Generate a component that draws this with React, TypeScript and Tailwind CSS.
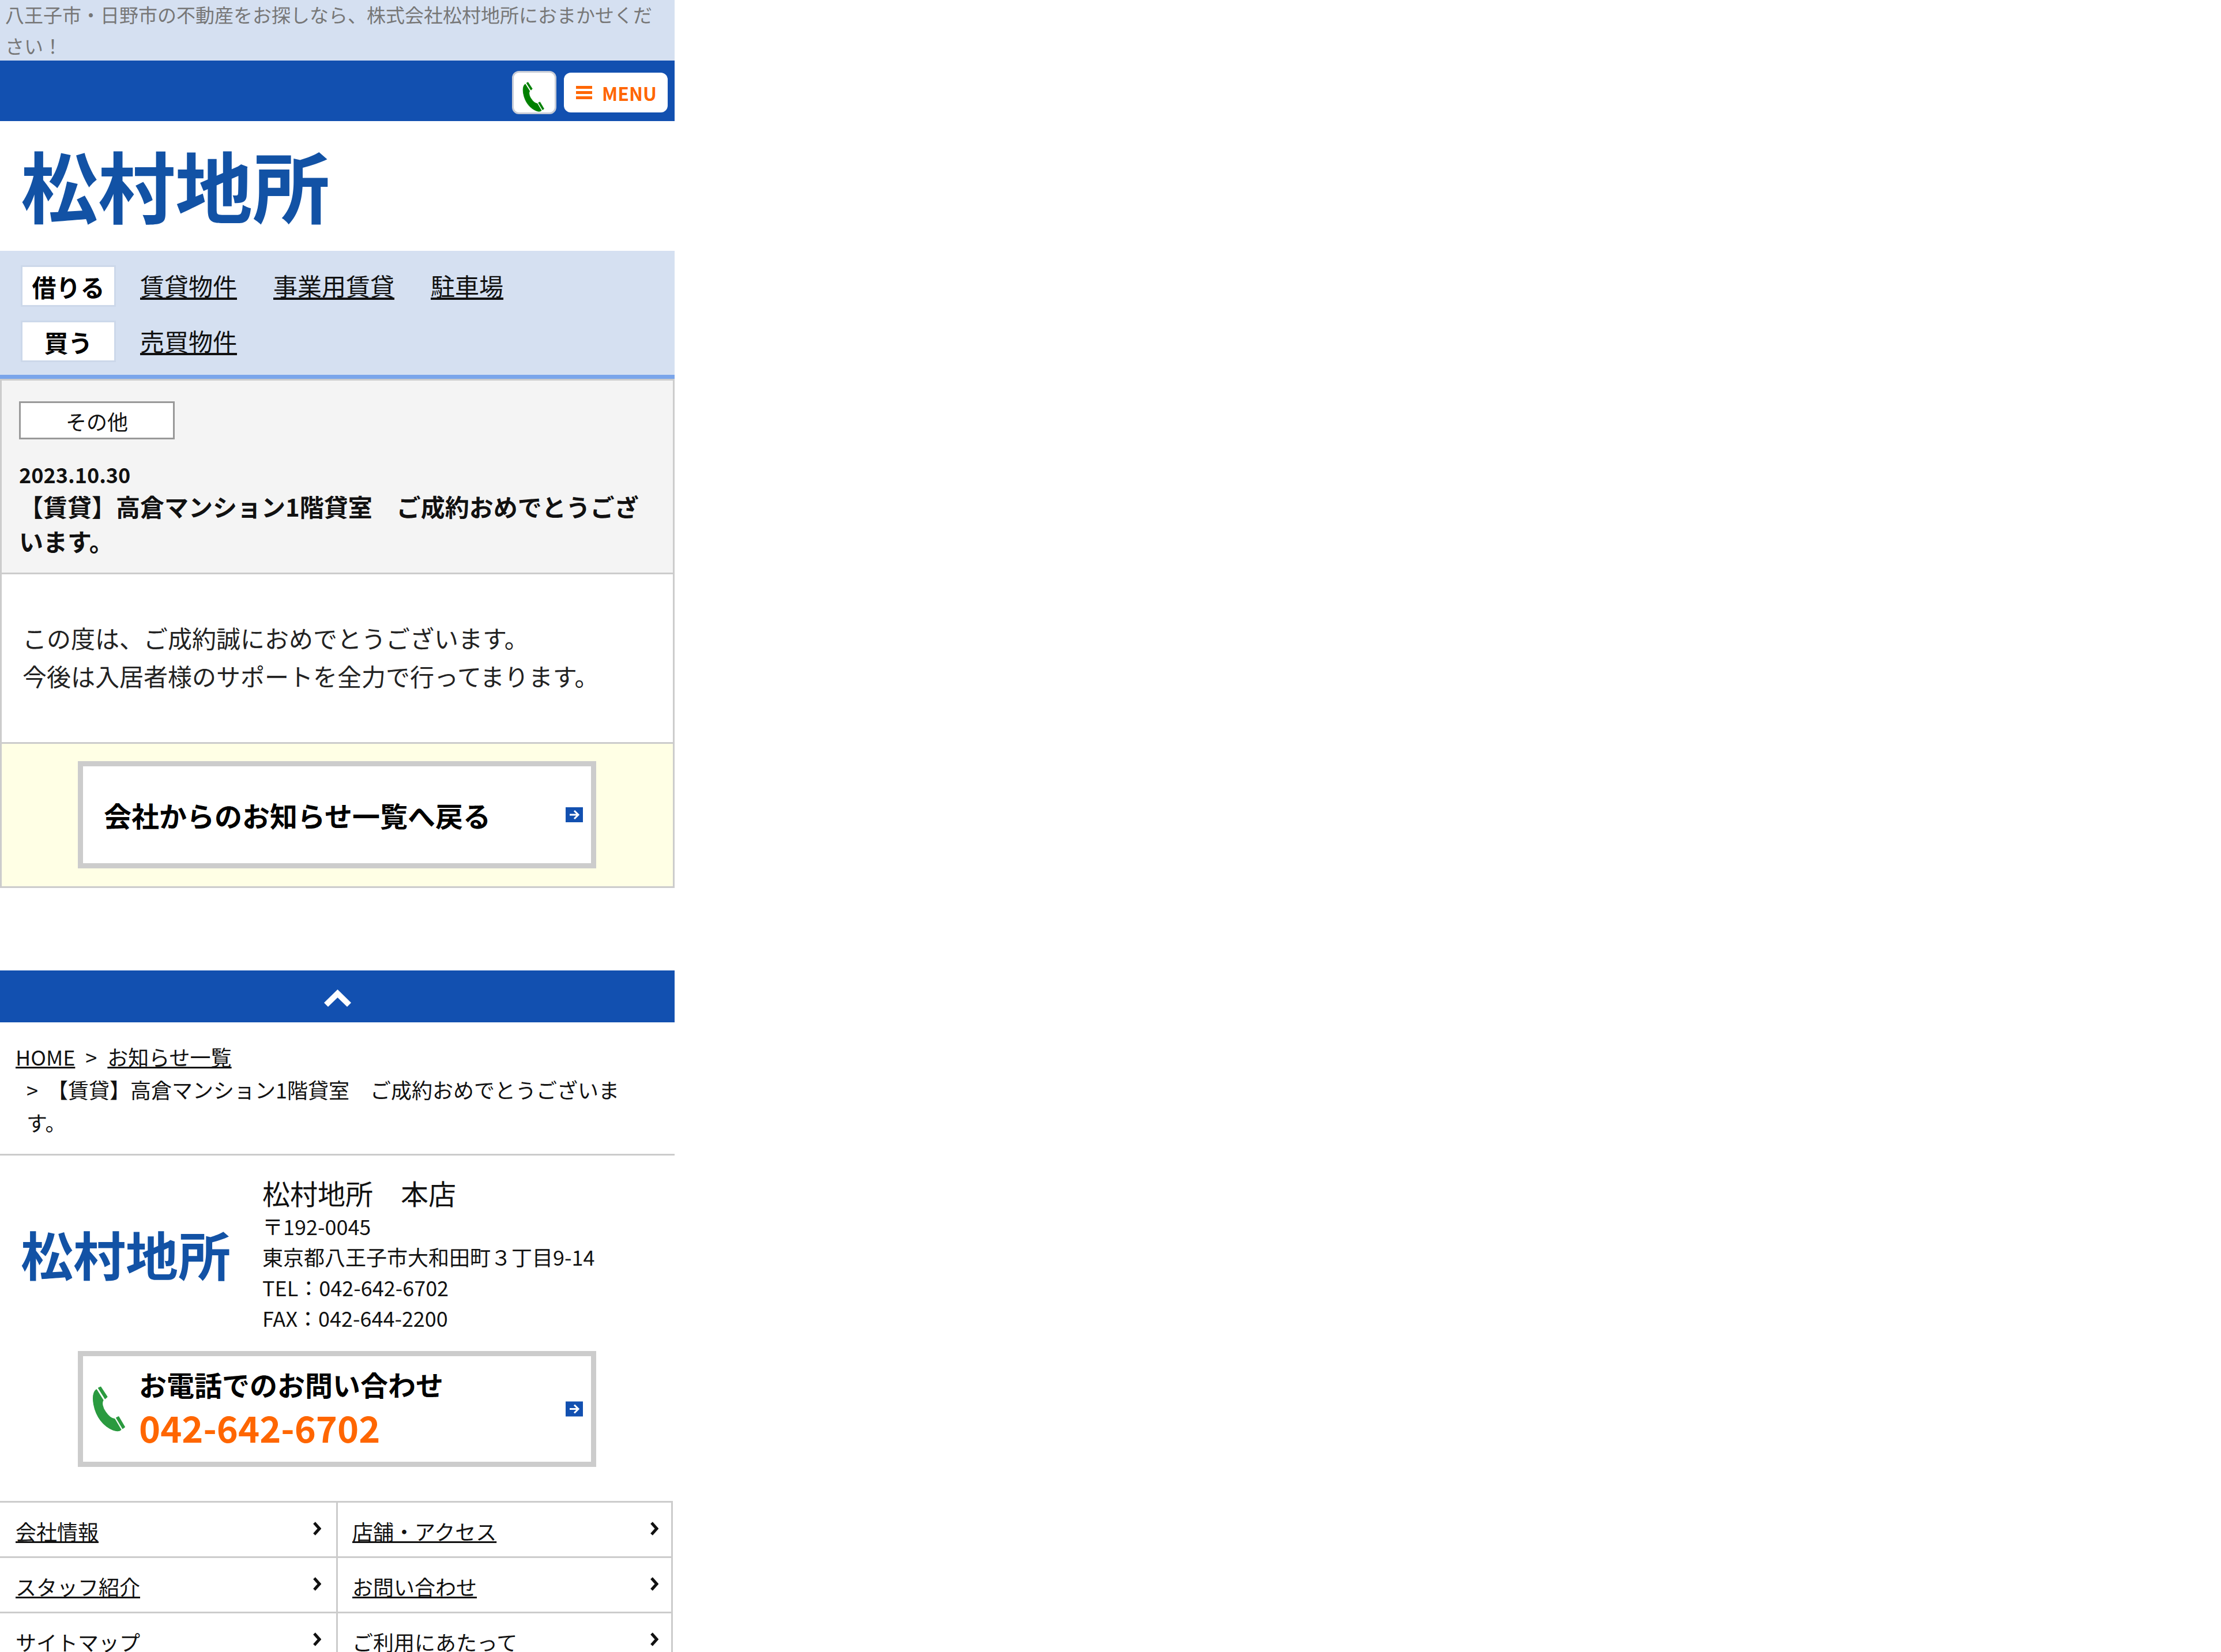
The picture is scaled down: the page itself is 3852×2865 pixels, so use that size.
const FONT = "font-['Noto_Sans_CJK_JP','Noto_Sans',sans-serif]";

function Phone({ className }: { className: string }) {
  return (
    <svg viewBox="90 215 172 237" className={className} fill="currentColor" stroke="currentColor" strokeWidth="4" strokeLinejoin="round">
      <path d="M112 232 L147 288 C139 300 142 325 160 350 C175 372 192 385 207 386 L240 442 C232 450 215 450 200 444 C150 425 110 375 98 310 C92 275 94 245 112 232 Z" />
      <path d="M122 224 L134 218 L168 270 L157 280 Z" />
      <path d="M216 380 L228 374 L260 428 L249 436 Z" />
    </svg>
  );
}

function ArrowBox({ className }: { className: string }) {
  return (
    <svg viewBox="0 0 30 26" className={className}>
      <rect width="30" height="26" fill="#1250b0" />
      <path d="M7 13 H22 M15 6 L22 13 L15 20" fill="none" stroke="#fff" strokeWidth="3" />
    </svg>
  );
}

function AngleRight() {
  return (
    <svg viewBox="0 0 15 24" className="w-[15px] h-[24px]">
      <path d="M3 2 L12 12 L3 22" fill="none" stroke="#111" strokeWidth="5" />
    </svg>
  );
}

const footerLinks = [
  ['会社情報', '店舗・アクセス'],
  ['スタッフ紹介', 'お問い合わせ'],
  ['サイトマップ', 'ご利用にあたって'],
];

export default function App() {
  return (
    <div className={`${FONT} h-[2865px] overflow-hidden bg-white text-[36px] text-[#111]`}>
      <div className="w-[1170px]">
        {/* Top text */}
        <h1 className="flow-root h-[105px] bg-[#d5e0f1] pl-[9px] pr-[30px] text-[33px] leading-[54px] font-normal text-[#777]">
          <span className="block -mt-[2px]">八王子市・日野市の不動産をお探しなら、株式会社松村地所におまかせください！</span>
        </h1>

        {/* Blue bar */}
        <div className="h-[105px] bg-[#1250b0] flex items-center justify-end gap-[13px] pr-[12px] pt-[6px]">
          <a className="w-[77px] h-[75px] bg-white border-[3px] border-[#c8ccd6] rounded-[12px] flex items-center justify-center">
            <Phone className="w-[38px] h-[52px] text-[#008000] mt-[14px] mr-[4px]" />
          </a>
          <a className="w-[180px] h-[69px] bg-white rounded-[12px] flex items-center pl-[21px] gap-[17px] text-[#ff6600]">
            <span className="flex flex-col gap-[4px]">
              <span className="block w-[28px] h-[5px] bg-[#ff6600]" />
              <span className="block w-[28px] h-[5px] bg-[#ff6600]" />
              <span className="block w-[28px] h-[5px] bg-[#ff6600]" />
            </span>
            <span className="text-[32px] font-bold leading-none">MENU</span>
          </a>
        </div>

        {/* Logo */}
        <div className="h-[225px] pl-[36px] flex items-center">
          <div className="text-[134px] leading-none font-bold text-[#1252a5] whitespace-nowrap mb-[8px]">松村地所</div>
        </div>

        {/* Nav */}
        <nav className="h-[222px] bg-[#d5e0f1] border-b-[7px] border-[#7aa5ea] pl-[36px] pt-[25px]">
          <div className="flex items-center h-[72px]">
            <span className="w-[165px] h-[72px] bg-white border-[3px] border-[#ccd8ea] flex items-center justify-center text-[42px] font-bold text-black">借りる</span>
            <a className="ml-[42px] mb-[4px] text-[42px] underline">賃貸物件</a>
            <a className="ml-[63px] mb-[4px] text-[42px] underline">事業用賃貸</a>
            <a className="ml-[63px] mb-[4px] text-[42px] underline">駐車場</a>
          </div>
          <div className="flex items-center h-[72px] mt-[24px]">
            <span className="w-[165px] h-[72px] bg-white border-[3px] border-[#ccd8ea] flex items-center justify-center text-[42px] font-bold text-black">買う</span>
            <a className="ml-[42px] mb-[4px] text-[42px] underline">売買物件</a>
          </div>
        </nav>

        {/* Article */}
        <article className="border-[3px] border-[#ccc] h-[883px]">
          <header className="h-[336px] bg-[#f4f4f4] border-b-[3px] border-[#ccc] pl-[30px] pr-[30px] pt-[36px]">
            <div className="w-[270px] h-[66px] bg-white border-[3px] border-[#999] flex items-center justify-center text-[36px] leading-none pt-[2px]">その他</div>
            <p className="mt-[35px] text-[36px] leading-[51px] font-bold">2023.10.30</p>
            <h2 className="text-[42px] leading-[60px] font-bold">【賃貸】高倉マンション1階貸室　ご成約おめでとうございます。</h2>
          </header>
          <div className="h-[294px] border-b-[3px] border-[#ccc] pl-[36px] pt-[77px] text-[42px] leading-[66px] text-[#222]">
            <p>この度は、ご成約誠におめでとうございます。</p>
            <p>今後は入居者様のサポートを全力で行ってまります。</p>
          </div>
          <div className="h-[247px] bg-[#ffffe5] pt-[30px]">
            <a className="ml-[132px] w-[899px] h-[186px] bg-white border-[9px] border-[#ccc] flex items-center justify-between pl-[36px] pr-[14px]">
              <span className="text-[48px] font-bold leading-none text-black">会社からのお知らせ一覧へ戻る</span>
              <ArrowBox className="w-[30px] h-[26px]" />
            </a>
          </div>
        </article>

        {/* Page top */}
        <div className="mt-[143px] h-[90px] bg-[#1250b0] flex items-center justify-center">
          <svg viewBox="0 0 47 30" className="w-[47px] h-[30px] mt-[6px]">
            <path d="M0 23 L23.5 0 L47 23 L40 30 L23.5 14 L7 30 Z" fill="#fff" />
          </svg>
        </div>

        {/* Breadcrumb */}
        <div className="h-[231px] border-b-[3px] border-[#ccc] pt-[31px] leading-[57px]">
          <p className="pl-[27px]">
            <a className="underline">HOME</a>
            <span className="ml-[18px] mr-[18px]">&gt;</span>
            <a className="underline">お知らせ一覧</a>
          </p>
          <p className="pl-[46px] pr-[80px]">&gt;&nbsp;&nbsp;【賃貸】高倉マンション1階貸室　ご成約おめでとうございます。</p>
        </div>

        {/* Store */}
        <div className="flex items-center h-[339px] pl-[36px]">
          <div className="w-[419px] text-[91px] leading-none font-bold text-[#1252a5] whitespace-nowrap">松村地所</div>
          <div className="leading-[53px]">
            <h3 className="text-[48px] leading-[72px] font-normal">松村地所　本店</h3>
            <div className="-mt-[4px] mb-[4px]">
              <p>〒192-0045</p>
              <p>東京都八王子市大和田町３丁目9-14</p>
              <p>TEL：042-642-6702</p>
              <p>FAX：042-644-2200</p>
            </div>
          </div>
        </div>

        {/* Phone button */}
        <a className="ml-[135px] w-[899px] h-[201px] bg-white border-[9px] border-[#ccc] flex items-center pl-[16px] pr-[14px]">
          <Phone className="w-[57px] h-[79px] text-[#2a9a3f] shrink-0" />
          <span className="ml-[24px] flex-1 flex flex-col mb-[4px]">
            <span className="text-[48px] leading-[66px] font-bold text-black">お電話でのお問い合わせ</span>
            <span className="text-[63px] leading-[84px] font-bold text-[#ff6600]">042-642-6702</span>
          </span>
          <ArrowBox className="w-[30px] h-[27px]" />
        </a>

        {/* Footer links */}
        <div className="mt-[59px] w-[1167px] border-t-[3px] border-[#ccc]">
          {footerLinks.map((row) => (
            <div key={row[0]} className="grid grid-cols-[586px_581px] h-[96px] border-b-[3px] border-[#ccc]">
              {row.map((label, i) => (
                <div key={label} className={`flex justify-between pt-[23px] border-r-[3px] border-[#ccc] ${i === 0 ? 'pl-[27px] pr-[26px]' : 'pl-[25px] pr-[22px]'}`}>
                  <a className="underline leading-[52px]">{label}</a>
                  <span className="mt-[10px]"><AngleRight /></span>
                </div>
              ))}
            </div>
          ))}
        </div>
      </div>
    </div>
  );
}
